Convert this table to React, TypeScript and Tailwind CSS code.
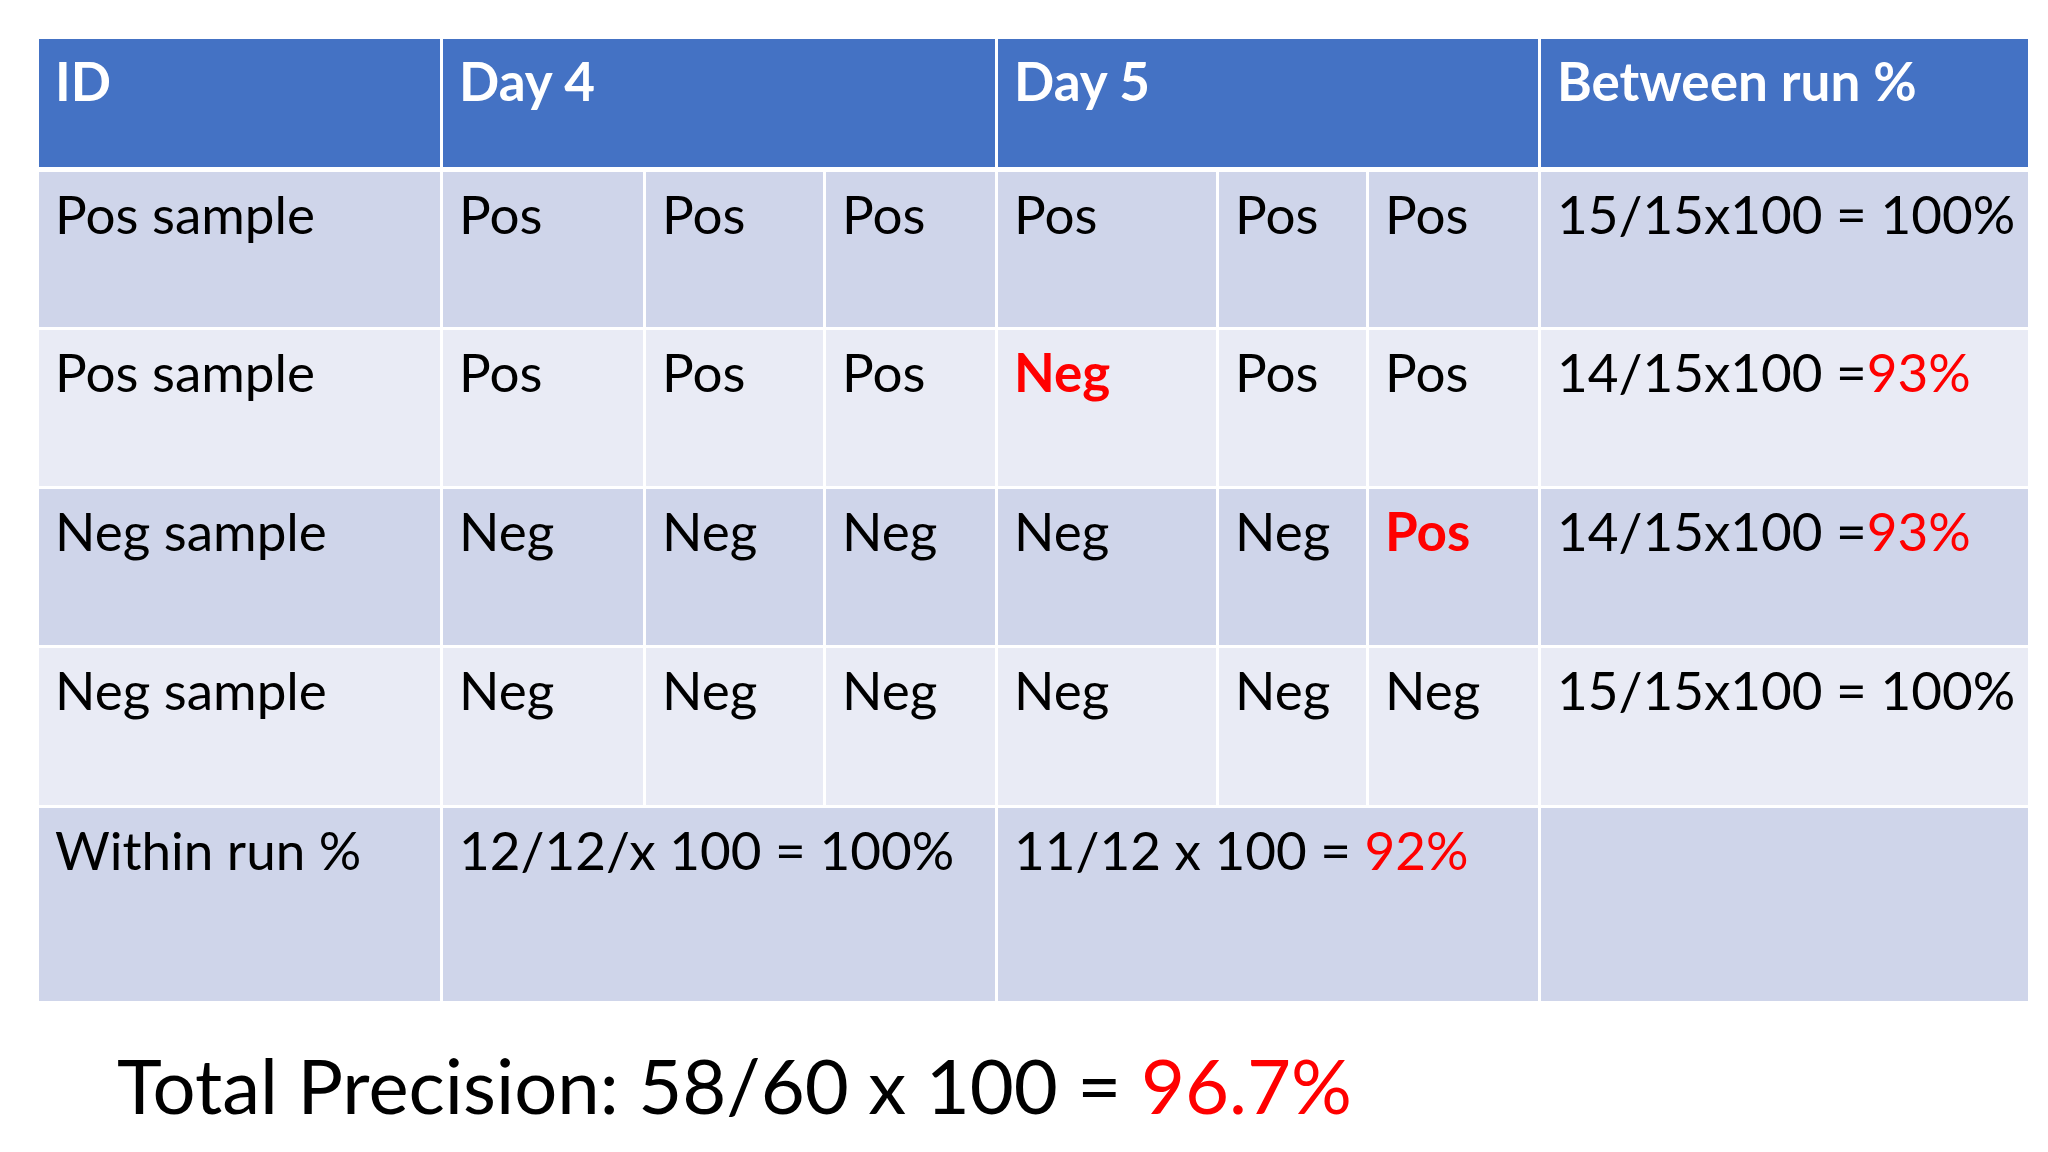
import React from 'react'

// Precision summary table (Day 4 / Day 5 replicate runs)

type Cell = { text: React.ReactNode; red?: boolean }

const ODD = 'bg-[#cfd5ea]'
const EVEN = 'bg-[#e9ebf5]'

const rows: { id: string; cells: Cell[]; between: React.ReactNode; bg: string; h: string }[] = [
    {
        id: 'Pos sample',
        cells: [{ text: 'Pos' }, { text: 'Pos' }, { text: 'Pos' }, { text: 'Pos' }, { text: 'Pos' }, { text: 'Pos' }],
        between: '15/15x100 = 100%',
        bg: ODD,
        h: 'h-[155px]',
    },
    {
        id: 'Pos sample',
        cells: [{ text: 'Pos' }, { text: 'Pos' }, { text: 'Pos' }, { text: 'Neg', red: true }, { text: 'Pos' }, { text: 'Pos' }],
        between: (
            <>
                14/15x100 =<span className="text-[#ff0000]">93%</span>
            </>
        ),
        bg: EVEN,
        h: 'h-[156px]',
    },
    {
        id: 'Neg sample',
        cells: [{ text: 'Neg' }, { text: 'Neg' }, { text: 'Neg' }, { text: 'Neg' }, { text: 'Neg' }, { text: 'Pos', red: true }],
        between: (
            <>
                14/15x100 =<span className="text-[#ff0000]">93%</span>
            </>
        ),
        bg: ODD,
        h: 'h-[156px]',
    },
    {
        id: 'Neg sample',
        cells: [{ text: 'Neg' }, { text: 'Neg' }, { text: 'Neg' }, { text: 'Neg' }, { text: 'Neg' }, { text: 'Neg' }],
        between: '15/15x100 = 100%',
        bg: EVEN,
        h: 'h-[157px]',
    },
]

const cellText = 'pl-[16px] pt-[15px] text-[53px] leading-none whitespace-nowrap'
const headText = 'bg-[#4472c4] pl-[16px] pt-[15px] text-[53px] leading-none font-bold text-white whitespace-nowrap'

export default function App() {
    return (
        <div className="w-[2048px] h-[1152px] bg-white pl-[39px] pt-[39px] font-['Lato',sans-serif] text-black overflow-hidden">
            <div className="w-[1989px] grid grid-cols-[401px_200px_177px_169px_218px_147px_169px_487px] gap-x-[3px] bg-white">
                {/* header */}
                <div className={`h-[128px] ${headText}`}>ID</div>
                <div className={`col-span-3 ${headText}`}>Day 4</div>
                <div className={`col-span-3 ${headText}`}>Day 5</div>
                <div className={headText}>Between run %</div>

                <div className="col-span-8 h-[5px]" />

                {rows.map((r, i) => (
                    <React.Fragment key={i}>
                        <div className={`${r.bg} ${r.h} ${cellText}`}>{r.id}</div>
                        {r.cells.map((c, j) => (
                            <div key={j} className={`${r.bg} ${cellText} ${c.red ? 'font-bold text-[#ff0000]' : 'text-black'}`}>
                                {c.text}
                            </div>
                        ))}
                        <div className={`${r.bg} ${cellText}`}>{r.between}</div>
                        <div className="col-span-8 h-[3px]" />
                    </React.Fragment>
                ))}

                {/* within run row */}
                <div className={`${ODD} h-[193px] ${cellText}`}>Within run %</div>
                <div className={`${ODD} col-span-3 ${cellText}`}>12/12/x 100 = 100%</div>
                <div className={`${ODD} col-span-3 ${cellText}`}>
                    11/12 x 100 = <span className="text-[#ff0000]">92%</span>
                </div>
                <div className={ODD} />
            </div>

            <div className="pl-[78px] pt-[46px] text-[76px] leading-none whitespace-nowrap">
                Total Precision: 58/60 x 100 = <span className="text-[#ff0000]">96.7%</span>
            </div>
        </div>
    )
}
